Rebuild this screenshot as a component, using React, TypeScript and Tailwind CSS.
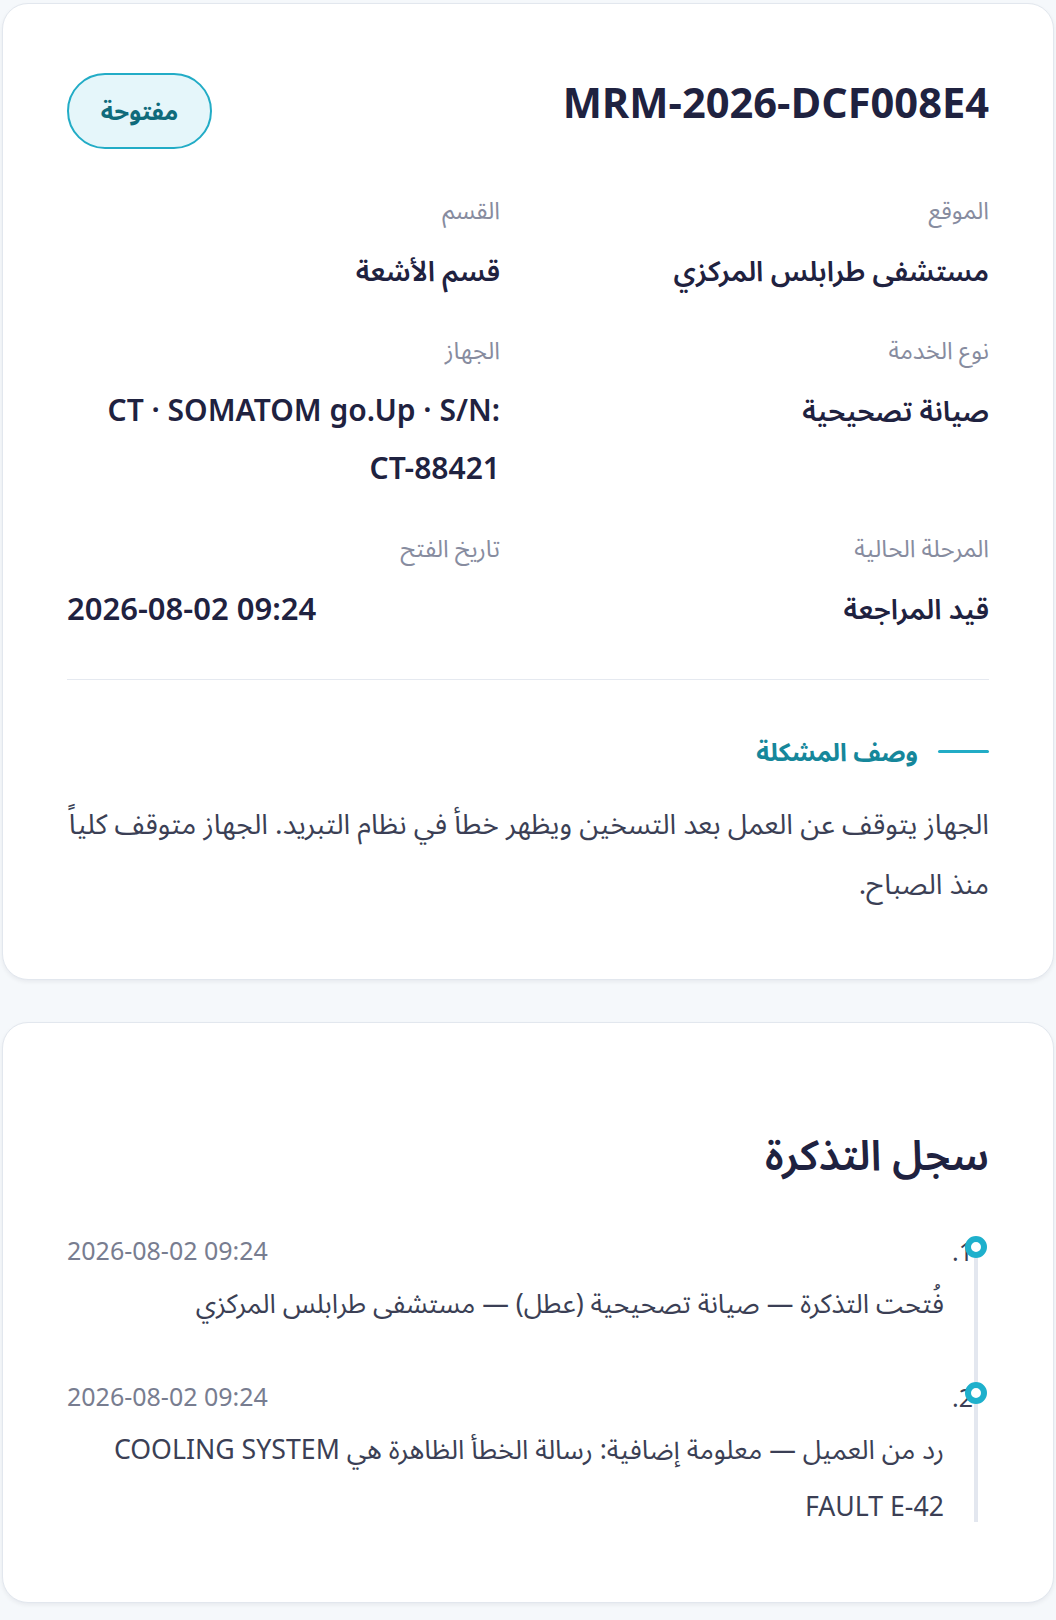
import React from "react";

const FONT = {
  fontFamily:
    '"Noto Sans", "Noto Sans Arabic", "Noto Naskh Arabic", "DejaVu Sans", sans-serif',
};

function Field({
  label,
  children,
}: {
  label: string;
  children: React.ReactNode;
}) {
  return (
    <div className="flex flex-col">
      <div className="text-[24px] leading-[30px] text-[#878c9f]">{label}</div>
      <div className="mt-4 text-[28px] font-semibold leading-[58px] text-[#1f2240]">
        {children}
      </div>
    </div>
  );
}

function TimelineItem({
  n,
  date,
  text,
}: {
  n: number;
  date: string;
  text: React.ReactNode;
}) {
  return (
    <li className="relative pr-[45px]">
      <span className="absolute right-[16px] top-0 text-[25px] leading-[32px] text-[#3b3f55]">
        {n}.
      </span>
      <span className="absolute right-[2px] top-[1px] h-[22px] w-[22px] rounded-full border-[6px] border-[#1eb0cc] bg-white" />
      <div
        dir="ltr"
        className="text-left text-[25px] leading-[30px] text-[#787d90]"
      >
        {date}
      </div>
      <p className="mt-[9px] text-[26.7px] leading-[57px] text-[#3b3f55]">
        {text}
      </p>
    </li>
  );
}

export default function App() {
  return (
    <div
      dir="rtl"
      style={FONT}
      className="flex min-h-[1620px] flex-col gap-[42px] bg-[#f5f8fb] px-[2px] pb-4 pt-[3px]"
    >
      <section className="rounded-[26px] border border-[#e2e7ee] bg-white px-16 pb-[66px] pt-[69px] shadow-[0_2px_4px_rgba(15,23,42,0.06)]">
        <div className="flex items-start justify-between">
          <h1
            dir="ltr"
            className="text-[41.6px] font-bold leading-[58px] text-[#1f2240]"
            style={{ fontFamily: '"Open Sans", "Noto Sans", sans-serif' }}
          >
            MRM-2026-DCF008E4
          </h1>
          <span className="flex h-[76px] w-[145px] items-center justify-center rounded-full border-2 border-[#22acc6] bg-[#e5f6fa] text-[24px] font-bold text-[#0f6b7b]">
            مفتوحة
          </span>
        </div>

        <div className="mt-[46px] grid grid-cols-2 gap-x-14 gap-y-9">
          <Field label="الموقع">مستشفى طرابلس المركزي</Field>
          <Field label="القسم">قسم الأشعة</Field>
          <Field label="نوع الخدمة">صيانة تصحيحية</Field>
          <Field label="الجهاز">
            <span className="text-[30px]">
              CT · SOMATOM go.Up · S/N:{" "}
              <span className="whitespace-nowrap">CT-88421</span>
            </span>
          </Field>
          <Field label="المرحلة الحالية">قيد المراجعة</Field>
          <Field label="تاريخ الفتح">
            <div dir="ltr" className="text-left text-[31px]">
              2026-08-02 09:24
            </div>
          </Field>
        </div>

        <div className="mt-[42px] border-t border-[#e5e9f0] pt-[56px]">
          <div className="flex items-center gap-5">
            <span className="h-[3px] w-[51px] rounded-full bg-[#22acc6]" />
            <h2 className="text-[25px] font-bold leading-[30px] text-[#16879b]">
              وصف المشكلة
            </h2>
          </div>
          <p className="mt-[27px] text-[28px] leading-[60px] text-[#3b3f55]">
            الجهاز يتوقف عن العمل بعد التسخين ويظهر خطأ في نظام التبريد. الجهاز
            متوقف كلياً منذ الصباح.
          </p>
        </div>
      </section>

      <section className="rounded-[26px] border border-[#e2e7ee] bg-white px-16 pb-[68px] pt-[102px] shadow-[0_2px_4px_rgba(15,23,42,0.06)]">
        <h2 className="text-[42px] font-semibold leading-[58px] text-[#1f2240]">
          سجل التذكرة
        </h2>
        <div className="relative mt-[52px]">
          <div className="absolute bottom-[12px] right-[11px] top-[12px] w-[4px] bg-[#e3e7ef]" />
          <ol className="relative flex flex-col gap-[50px]">
            <TimelineItem
              n={1}
              date="2026-08-02 09:24"
              text="فُتحت التذكرة — صيانة تصحيحية (عطل) — مستشفى طرابلس المركزي"
            />
            <TimelineItem
              n={2}
              date="2026-08-02 09:24"
              text="رد من العميل — معلومة إضافية: رسالة الخطأ الظاهرة هي COOLING SYSTEM FAULT E-42"
            />
          </ol>
        </div>
      </section>
    </div>
  );
}
